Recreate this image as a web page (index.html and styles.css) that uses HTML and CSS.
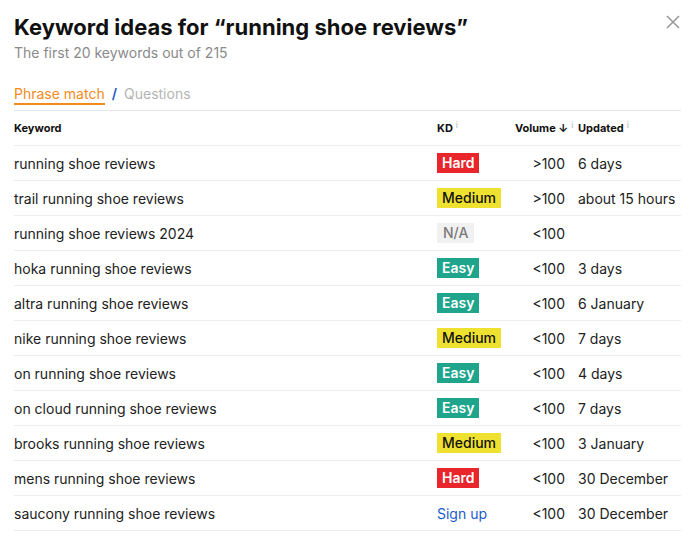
FILE: index.html
```html
<!DOCTYPE html>
<html>
<head>
<meta charset="utf-8">
<link rel="stylesheet" href="styles.css">
</head>
<body>
<div class="dialog">
  <header class="head">
    <div>
      <h1 class="title">Keyword ideas for “running shoe reviews”</h1>
      <p class="subtitle">The first 20 keywords out of 215</p>
    </div>
    <button class="close" aria-label="Close">
      <svg width="14" height="14" viewBox="0 0 14 14"><path d="M1 1L13 13M13 1L1 13" stroke="#9a9a9a" stroke-width="1.6" fill="none"/></svg>
    </button>
  </header>
  <nav class="tabs">
    <span class="tab active">Phrase match</span>
    <span class="sep">/</span>
    <span class="tab">Questions</span>
  </nav>
  <div class="table">
    <div class="row hrow">
      <div class="c kw">Keyword</div>
      <div class="c kd">KD<sup class="info">i</sup></div>
      <div class="c vol">Volume <span class="arrow">↓</span><sup class="info">i</sup></div>
      <div class="c upd">Updated<sup class="info">i</sup></div>
    </div>
    <div class="row"><div class="c kw">running shoe reviews</div><div class="c kd"><span class="badge hard">Hard</span></div><div class="c vol">&gt;100</div><div class="c upd">6 days</div></div>
    <div class="row"><div class="c kw">trail running shoe reviews</div><div class="c kd"><span class="badge medium">Medium</span></div><div class="c vol">&gt;100</div><div class="c upd">about 15 hours</div></div>
    <div class="row"><div class="c kw">running shoe reviews 2024</div><div class="c kd"><span class="badge na">N/A</span></div><div class="c vol">&lt;100</div><div class="c upd"></div></div>
    <div class="row"><div class="c kw">hoka running shoe reviews</div><div class="c kd"><span class="badge easy">Easy</span></div><div class="c vol">&lt;100</div><div class="c upd">3 days</div></div>
    <div class="row"><div class="c kw">altra running shoe reviews</div><div class="c kd"><span class="badge easy">Easy</span></div><div class="c vol">&lt;100</div><div class="c upd">6 January</div></div>
    <div class="row"><div class="c kw">nike running shoe reviews</div><div class="c kd"><span class="badge medium">Medium</span></div><div class="c vol">&lt;100</div><div class="c upd">7 days</div></div>
    <div class="row"><div class="c kw">on running shoe reviews</div><div class="c kd"><span class="badge easy">Easy</span></div><div class="c vol">&lt;100</div><div class="c upd">4 days</div></div>
    <div class="row"><div class="c kw">on cloud running shoe reviews</div><div class="c kd"><span class="badge easy">Easy</span></div><div class="c vol">&lt;100</div><div class="c upd">7 days</div></div>
    <div class="row"><div class="c kw">brooks running shoe reviews</div><div class="c kd"><span class="badge medium">Medium</span></div><div class="c vol">&lt;100</div><div class="c upd">3 January</div></div>
    <div class="row"><div class="c kw">mens running shoe reviews</div><div class="c kd"><span class="badge hard">Hard</span></div><div class="c vol">&lt;100</div><div class="c upd">30 December</div></div>
    <div class="row"><div class="c kw">saucony running shoe reviews</div><div class="c kd"><a class="signup" href="#">Sign up</a></div><div class="c vol">&lt;100</div><div class="c upd">30 December</div></div>
  </div>
</div>
</body>
</html>
```

FILE: styles.css
```css
* { box-sizing: border-box; }
html, body { margin: 0; padding: 0; background: #fff; }
body {
  font-family: Inter, "Noto Sans", "Liberation Sans", sans-serif;
  color: #1f1f1f;
}
.dialog {
  width: 700px;
  padding: 13px 19px 0 14px;
}
.head {
  display: flex;
  justify-content: space-between;
  align-items: flex-start;
}
.title {
  margin: 0;
  font-size: 22px;
  line-height: 28px;
  font-weight: 700;
  color: #111;
  letter-spacing: 0;
}
.subtitle {
  margin: 3px 0 0;
  font-size: 14px;
  line-height: 18px;
  color: #8a8a8a;
}
.close {
  border: 0;
  background: none;
  padding: 0;
  margin: 2px 1px 0 0;
  width: 14px;
  height: 14px;
  display: flex;
}
.tabs {
  margin-top: 23px;
  display: flex;
  align-items: flex-start;
  gap: 7px;
  font-size: 14px;
  line-height: 18px;
  height: 26px;
  border-bottom: 1px solid #e6e6e6;
}
.tab { color: #b4b4b4; }
.tab.active {
  color: #f28b1c;
  border-bottom: 2px solid #f28b1c;
}
.sep { color: #1d56c7; font-weight: 600; }
.table { display: flex; flex-direction: column; }
.row {
  display: grid;
  grid-template-columns: 423px 78px 63px 1fr;
  height: 35px;
  align-items: center;
  border-bottom: 1px solid #ececec;
  font-size: 14px;
  color: #222;
}
.hrow { font-size: 11px; font-weight: 700; color: #111; }
.c { white-space: nowrap; }
.vol { text-align: right; padding-right: 13px; }
.hrow .vol { padding-right: 6px; }
.info {
  font-size: 9px;
  font-weight: 400;
  color: #b8b8b8;
  margin-left: 3px;
  vertical-align: 4px;
  line-height: 0;
}
.arrow { font-size: 11px; font-weight: 700; }
.badge {
  display: inline-block;
  height: 20px;
  line-height: 20px;
  padding: 0 5px;
  font-size: 14px;
  font-weight: 600;
}
.hard { background: #e8262b; color: #fff; }
.medium { background: #efe12f; color: #111; font-weight: 500; }
.easy { background: #1ea58b; color: #fff; }
.na { background: #f1f1f1; color: #7a7a7a; font-weight: 500; padding: 0 6px; }
.signup { color: #1b5cc8; text-decoration: none; }
```
